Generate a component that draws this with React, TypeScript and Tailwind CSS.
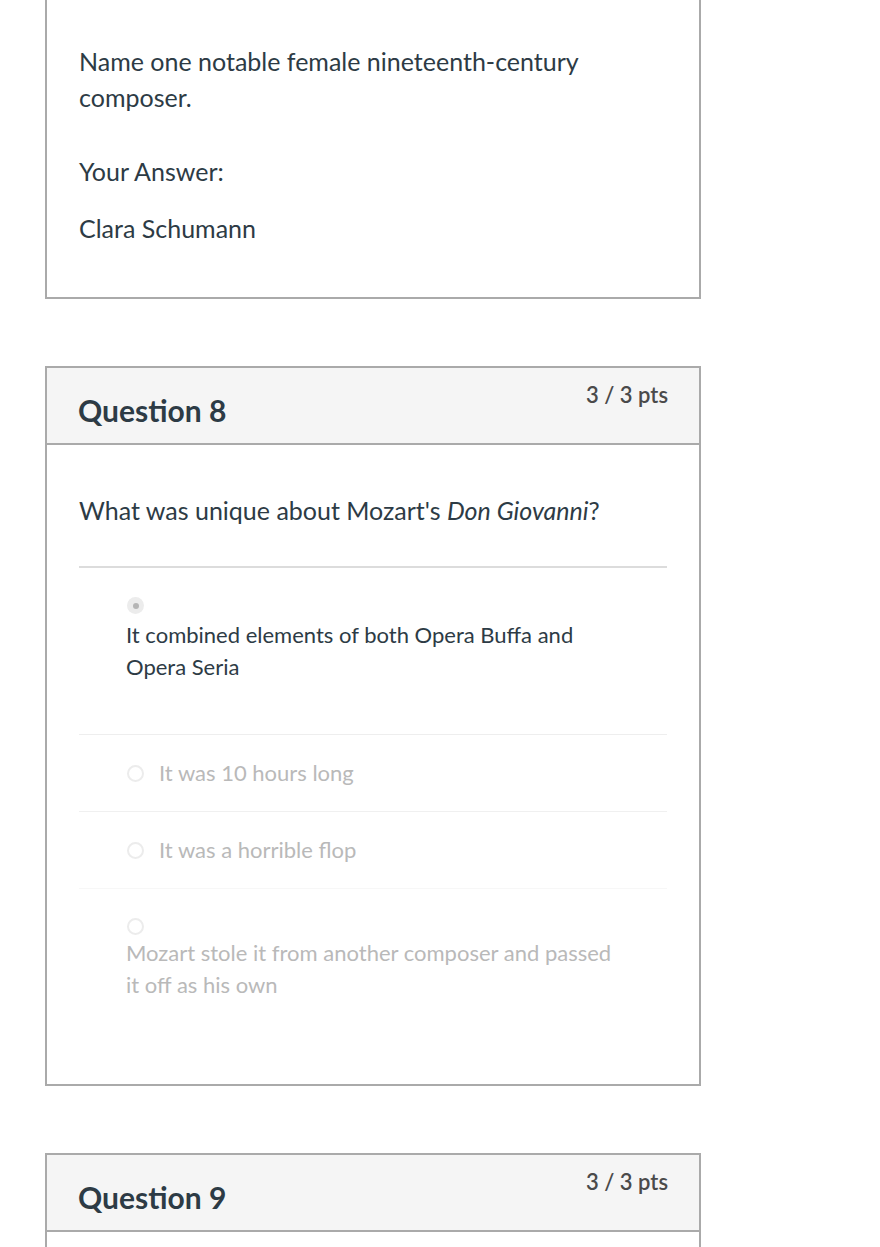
const font = { fontFamily: "Lato, 'Noto Sans', sans-serif" };

function Radio({ checked }: { checked?: boolean }) {
  if (checked) {
    return (
      <span className="flex h-[17px] w-[17px] items-center justify-center rounded-full bg-[#ececec]">
        <span className="h-[6px] w-[6px] rounded-full bg-[#b5b5b5]" />
      </span>
    );
  }
  return <span className="block h-[17px] w-[17px] rounded-full border-2 border-[#ececec] bg-white" />;
}

function Header({ title, pts }: { title: string; pts: string }) {
  return (
    <div className="flex h-[77px] items-start justify-between border-b-2 border-[#aaaaaa] bg-[#f5f5f5] px-[31px] pt-[12px]">
      <h2 className="mt-[11px] text-[30px] font-bold leading-[38px] text-[#2d3b45]">{title}</h2>
      <span className="text-[22px] font-semibold leading-[30px] text-[#4a4a4a]">{pts}</span>
    </div>
  );
}

export default function App() {
  return (
    <div className="min-h-[1247px] w-[880px] overflow-hidden bg-white text-[#2d3b45]" style={font}>
      {/* previous question, top cut off */}
      <div className="ml-[45px] w-[656px] border-2 border-t-0 border-[#aaaaaa] px-[32px] pb-[51px] pt-[43px]">
        <p className="text-[25px] leading-[36px]">
          Name one notable female nineteenth-century
          <br />
          composer.
        </p>
        <p className="mt-[38px] text-[25px] leading-[36px]">Your Answer:</p>
        <p className="mt-[21px] text-[25px] leading-[36px]">Clara Schumann</p>
      </div>

      {/* Question 8 */}
      <div className="ml-[45px] mt-[67px] w-[656px] border-2 border-[#aaaaaa]">
        <Header title="Question 8" pts="3 / 3 pts" />
        <div className="px-[32px] pb-[83px] pt-[47px]">
          <p className="text-[25px] leading-[36px]">
            What was unique about Mozart's <i>Don Giovanni</i>?
          </p>
          <div className="mt-[38px] h-[2px] bg-[#dcdcdc]" />

          <div className="border-b border-[#eeeeee] pb-[51px] pl-[47px] pt-[29px]">
            <div className="pl-[1px]">
              <Radio checked />
            </div>
            <p className="mt-[5px] text-[22px] leading-[32px] text-[#2d3b45]">
              It combined elements of both Opera Buffa and
              <br />
              Opera Seria
            </p>
          </div>

          <div className="flex items-center gap-[15px] border-b border-[#f0f0f0] py-[22px] pl-[48px] text-[#b9b9b9]">
            <Radio />
            <span className="text-[22px] leading-[32px]">It was 10 hours long</span>
          </div>

          <div className="flex items-center gap-[15px] border-b border-[#f7f7f7] py-[22px] pl-[48px] text-[#b9b9b9]">
            <Radio />
            <span className="text-[22px] leading-[32px]">It was a horrible flop</span>
          </div>

          <div className="pl-[47px] pt-[29px] text-[#b9b9b9]">
            <div className="pl-[1px]">
              <Radio />
            </div>
            <p className="mt-[2px] text-[22px] leading-[32px]">
              Mozart stole it from another composer and passed
              <br />
              it off as his own
            </p>
          </div>
        </div>
      </div>

      {/* Question 9 */}
      <div className="ml-[45px] mt-[67px] w-[656px] border-2 border-b-0 border-[#aaaaaa]">
        <Header title="Question 9" pts="3 / 3 pts" />
        <div className="h-[40px]" />
      </div>
    </div>
  );
}
